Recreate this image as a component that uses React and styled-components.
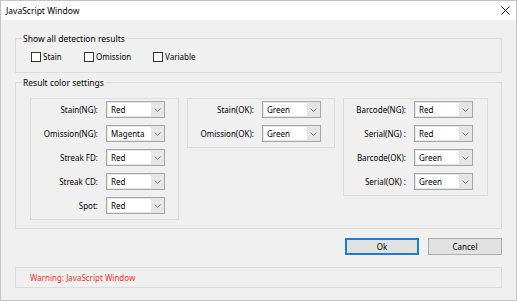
import React from "react";
import styled, { createGlobalStyle } from "styled-components";

const Global = createGlobalStyle`
  html, body { margin: 0; padding: 0; background: #f0f0f0; }
  * { box-sizing: border-box; }
`;

const Window = styled.div`
  width: 517px;
  height: 301px;
  border: 1px solid #c4c4c4;
  background: #f0f0f0;
  font-family: "Noto Sans", "Open Sans", sans-serif;
  font-size: 8px;
  color: #000;
  display: flex;
  flex-direction: column;
  overflow: hidden;
`;

const TitleBar = styled.div`
  height: 19px;
  background: #fff;
  display: flex;
  align-items: center;
  justify-content: space-between;
  padding: 0 6px 0 5px;
  font-size: 8.5px;
`;

const CloseIcon = () => (
  <svg width="9" height="9" viewBox="0 0 9 9">
    <path d="M0.5 0.5 L8.5 8.5 M8.5 0.5 L0.5 8.5" stroke="#222" strokeWidth="1" />
  </svg>
);

const Body = styled.div`
  flex: 1;
  padding: 13px 14px 0 14px;
  display: flex;
  flex-direction: column;
`;

const Group = styled.fieldset`
  margin: 0;
  padding: 0 0 ${(p) => p.$pb || 0}px 0;
  border: 1px solid #dcdcdc;
  min-width: 0;
  & + & { margin-top: 4px; }
`;

const Legend = styled.legend`
  margin-left: 6px;
  padding: 0 1px;
  line-height: 11px;
  font-size: 8.5px;
`;

const CheckRow = styled.div`
  display: flex;
  align-items: center;
  padding: 5px 0 0 15px;
  height: 20px;
`;

const CheckItem = styled.label`
  display: flex;
  align-items: center;
  gap: 2px;
  width: ${(p) => p.$w}px;
`;

const Box = styled.span`
  width: 10px;
  height: 10px;
  border: 1px solid #333;
  background: #fff;
`;

const Panels = styled.div`
  display: flex;
  align-items: flex-start;
  gap: 8px;
  padding: 10px 0 0 14px;
`;

const Panel = styled.div`
  width: ${(p) => p.$w}px;
  border: 1px solid #dcdcdc;
  padding: 2px ${(p) => p.$pr}px 5px 0;
  display: flex;
  flex-direction: column;
  gap: 7px;
`;

const Row = styled.div`
  display: flex;
  align-items: center;
  justify-content: flex-end;
  gap: 8px;
`;

const Label = styled.span`
  white-space: nowrap;
`;

const Select = styled.div`
  width: 59px;
  height: 17px;
  border: 1px solid #a6a6a6;
  background: #e6e6e6;
  padding: 1px;
  display: flex;
`;

const Field = styled.div`
  flex: 1;
  background: #fff;
  padding-left: 3px;
  display: flex;
  align-items: center;
`;

const Arrow = styled.div`
  width: 12px;
  display: flex;
  align-items: center;
  justify-content: center;
`;

const Chevron = () => (
  <svg width="7" height="4" viewBox="0 0 7 4">
    <path d="M0.5 0.5 L3.5 3.5 L6.5 0.5" fill="none" stroke="#777" strokeWidth="1" />
  </svg>
);

const Buttons = styled.div`
  display: flex;
  justify-content: flex-end;
  gap: 9px;
  margin-top: 9px;
`;

const Button = styled.button`
  width: 74px;
  height: 17px;
  margin: 0;
  padding: 0;
  font: inherit;
  background: #e1e1e1;
  border: ${(p) => (p.$primary ? "2px solid #1a7fd6" : "1px solid #adadad")};
  color: #000;
`;

const Status = styled.div`
  margin-top: 12px;
  height: 21px;
  border: 1px solid #dcdcdc;
  padding-left: 14px;
  display: flex;
  align-items: center;
  color: #ff2a2a;
`;

const Combo = ({ label, value }) => (
  <Row>
    <Label>{label}</Label>
    <Select>
      <Field>{value}</Field>
      <Arrow>
        <Chevron />
      </Arrow>
    </Select>
  </Row>
);

const panelA = [
  ["Stain(NG):", "Red"],
  ["Omission(NG):", "Magenta"],
  ["Streak FD:", "Red"],
  ["Streak CD:", "Red"],
  ["Spot:", "Red"],
];
const panelB = [
  ["Stain(OK):", "Green"],
  ["Omission(OK):", "Green"],
];
const panelC = [
  ["Barcode(NG):", "Red"],
  ["Serial(NG) :", "Red"],
  ["Barcode(OK):", "Green"],
  ["Serial(OK) :", "Green"],
];

export default function App() {
  return (
    <>
      <Global />
      <Window>
        <TitleBar>
          <span>JavaScript Window</span>
          <CloseIcon />
        </TitleBar>
        <Body>
          <Group $pb={8}>
            <Legend>Show all detection results</Legend>
            <CheckRow>
              <CheckItem $w={53}><Box />Stain</CheckItem>
              <CheckItem $w={69}><Box />Omission</CheckItem>
              <CheckItem $w={60}><Box />Variable</CheckItem>
            </CheckRow>
          </Group>
          <Group $pb={8}>
            <Legend>Result color settings</Legend>
            <Panels>
              <Panel $w={149} $pr={13}>
                {panelA.map(([l, v]) => <Combo key={l} label={l} value={v} />)}
              </Panel>
              <Panel $w={148} $pr={13}>
                {panelB.map(([l, v]) => <Combo key={l} label={l} value={v} />)}
              </Panel>
              <Panel $w={145} $pr={14}>
                {panelC.map(([l, v]) => <Combo key={l} label={l} value={v} />)}
              </Panel>
            </Panels>
          </Group>
          <Buttons>
            <Button $primary>Ok</Button>
            <Button>Cancel</Button>
          </Buttons>
          <Status>Warning: JavaScript Window</Status>
        </Body>
      </Window>
    </>
  );
}
